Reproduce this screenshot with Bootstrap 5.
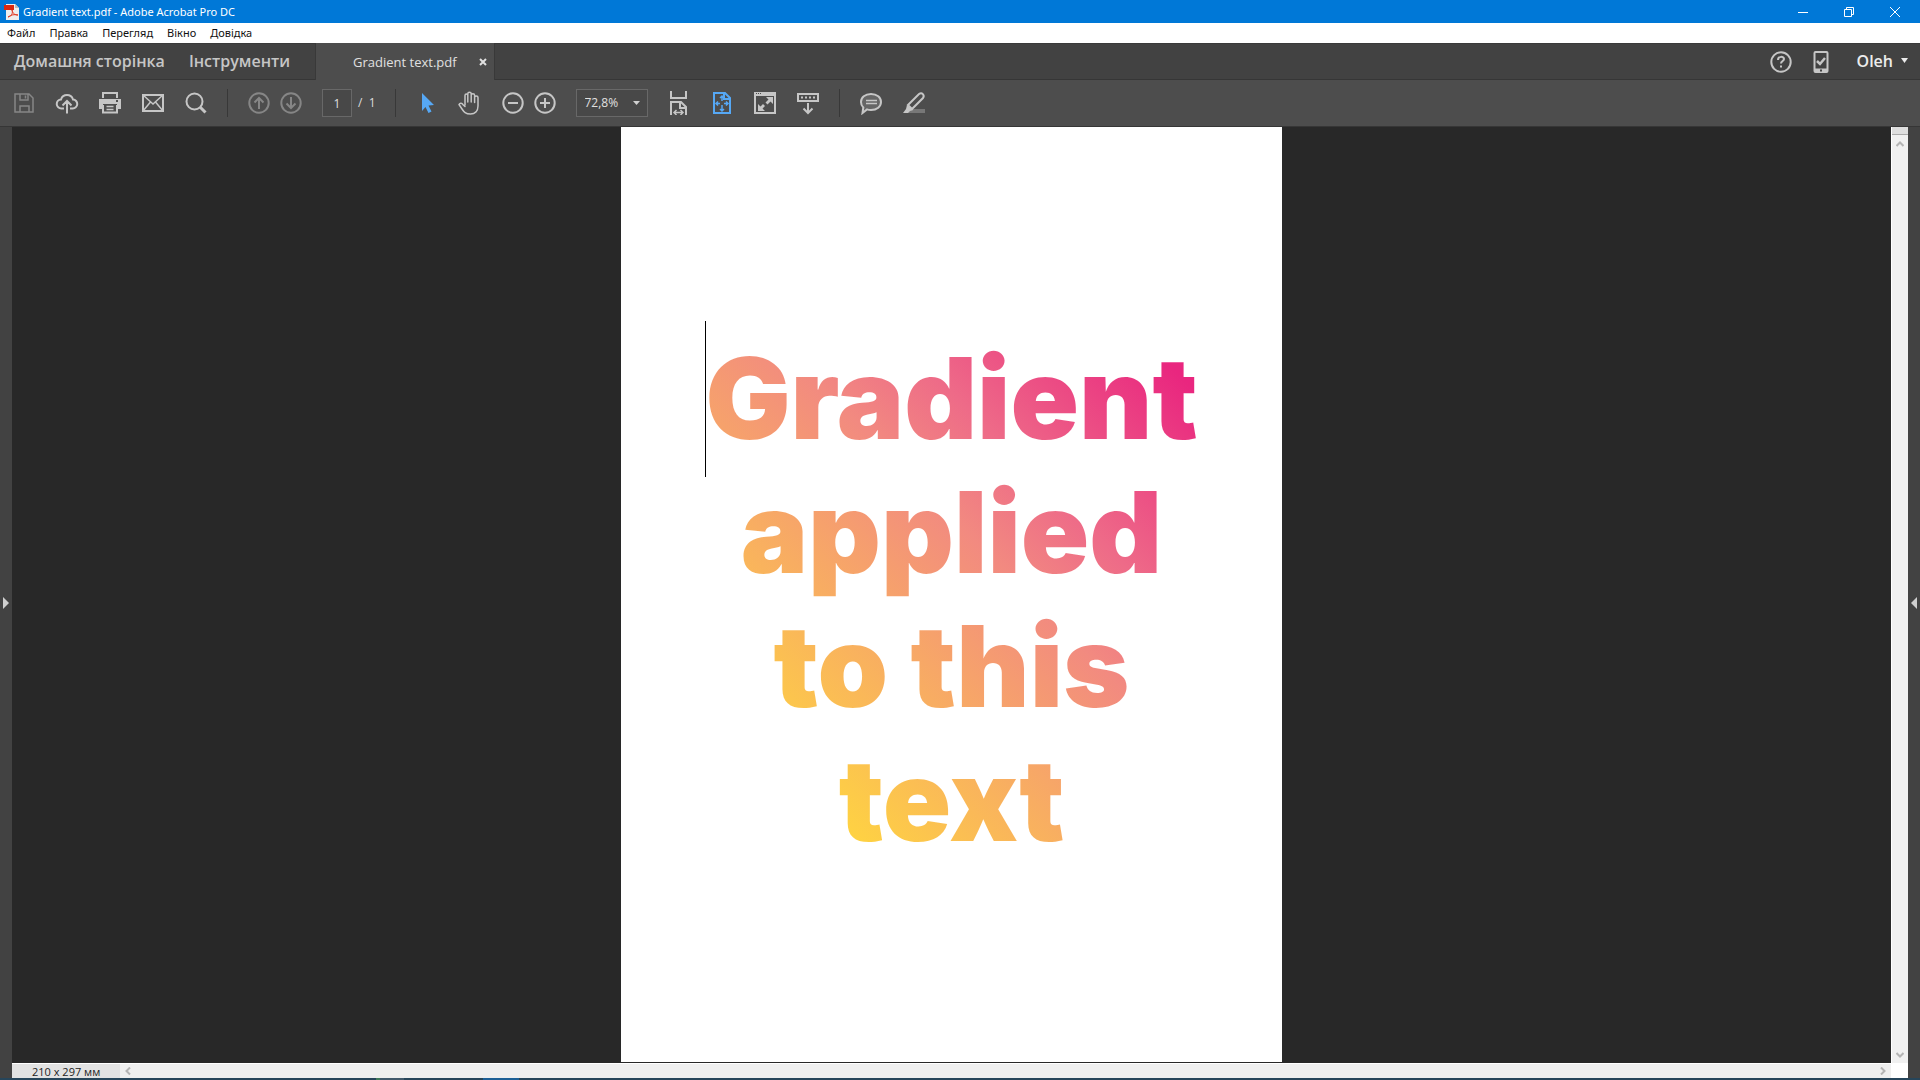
<!DOCTYPE html>
<html lang="uk">
<head>
<meta charset="utf-8">
<meta name="viewport" content="width=device-width, initial-scale=1">
<title>Gradient text.pdf - Adobe Acrobat Pro DC</title>
<link href="https://cdn.jsdelivr.net/npm/bootstrap@5.3.0/dist/css/bootstrap.min.css" rel="stylesheet">
<style>
  body { font-family: "Open Sans", "Noto Sans", sans-serif; font-size: 12px; line-height: 16px; background: #282828; }
  svg { display: block; fill: none; stroke: currentColor; stroke-width: 2; flex: none; }
  .btn, .tab-link { color: inherit; }
  .title-bar { background: #0078d7; height: 23px; color: #fff; padding: 0 2px 0 4px; font-family: "Noto Sans", sans-serif; font-size: 11px; }
  .win-btn { width: 46px; height: 23px; }
  .menu-bar { height: 20px; background: #fff; gap: 14px; padding-left: 7px; font-family: "Noto Sans", sans-serif; font-size: 11px; }
  .menu-bar a { color: #111; }
  .tab-bar { height: 37px; background: #424242; border-top: 1px solid #3a3a3a; border-bottom: 1px solid #363636; color: #c6c6c6; padding-left: 14px; }
  .tab-link { font-size: 16px; line-height: 20px; font-weight: 600; padding-bottom: 2px; }
  .doc-tab { width: 180px; height: 37px; background: #4d4d4d; border-left: 1px solid #393939; border-right: 1px solid #393939; margin-left: 25px; padding: 0 7px 0 37px; color: #e0e0e0; font-size: 13px; }
  .tab-bar .user-btn { font-size: 16px; line-height: 20px; font-weight: 600; color: #ececec; padding-bottom: 2px !important; }
  .tool-bar { height: 47px; background: #4d4d4d; border-bottom: 1px solid #363636; gap: 19px; padding-left: 12px; color: #c6c6c6; }
  .tool-pair { gap: 8px; }
  .dimmed { color: #868686; }
  .active-tool { color: #56a8f5; }
  .divider { width: 1px; height: 28px; background: #383838; }
  .page-field { gap: 6px; color: #dcdcdc; }
  .page-field input, .zoom-field { height: 28px; background: #484848; border: 1px solid #686868; color: #e0e0e0; border-radius: 0; }
  .page-field input { width: 30px; padding: 0; }
  .zoom-wrap { width: 72px; }
  .zoom-field { appearance: none; width: 100%; padding: 0 8px; }
  .zoom-arrow { right: 8px; top: 12px; pointer-events: none; }
  .side-rail { width: 12px; background: #424242; color: #cfcfcf; }
  .canvas { background: #282828; }
  .sheet { width: 661px; background: #fff; margin-bottom: 1px; padding-top: 204px; }
  .headline { font-family: Inter, sans-serif; font-weight: 900; font-size: 113px; line-height: 134px; }
  .headline span { display: block; color: transparent; background: linear-gradient(45deg, #ffd63f 15%, #f28a80 58%, #ee6b88 70%, #e9267f 94%); -webkit-background-clip: text; background-clip: text; }
  .caret { left: 0; top: -10px; width: 1px; height: 156px; background: #000; }
  .v-scroll { width: 17px; background: #f0f0f0; color: #b4b4b4; border-left: 1px solid #fff; }
  .split-grip { height: 8px; background: #dedede; border-bottom: 1px solid #aaa; }
  .h-scroll { height: 15px; background: #efefef; border-top: 1px solid #fff; color: #b4b4b4; }
  .page-size { width: 108px; background: #e2e2e2; color: #222; padding-left: 20px; font-size: 11px; }
  .scroll-corner { width: 17px; background: #fff; }
  .task-edge { height: 2px; background: #26455a; padding-left: 376px; }
  .task-edge i { height: 2px; }
  .task-app { width: 4px; background: #3f7a5a; }
  .task-mid { width: 24px; background: #41596b; margin-right: 79px; }
  .task-on { width: 36px; background: #1c5f96; }
</style>
</head>
<body class="vh-100 d-flex flex-column overflow-hidden">
<header>
  <div class="title-bar d-flex align-items-center">
    <svg width="15" height="16" viewBox="0 0 15 16" stroke="none"><path d="M2 0h9l4 4v12H2z" fill="#eee" stroke="none"/><path d="M0 1h10v5H0z" fill="#d9280f" stroke="none"/><path d="M11 0v4h4z" fill="#bbb" stroke="none"/><path d="M4 13c4-1 5-4 4-7 1 4 3 5 6 5-4-1-7 0-10 2z" stroke="#e03a25" stroke-width="1"/></svg>
    <span class="ms-1">Gradient text.pdf - Adobe Acrobat Pro DC</span>
    <div class="ms-auto d-flex">
      <button class="win-btn btn p-0 border-0 d-flex justify-content-center align-items-center" aria-label="Minimize"><svg width="10" height="10" viewBox="0 0 10 10"><path d="M0 5.5h10" stroke-width="1"/></svg></button>
      <button class="win-btn btn p-0 border-0 d-flex justify-content-center align-items-center" aria-label="Restore"><svg width="10" height="10" viewBox="0 0 10 10"><path d="M.5 2.5h7v7h-7zM2.5 2.500v-2h7v7h-2" stroke-width="1"/></svg></button>
      <button class="win-btn btn p-0 border-0 d-flex justify-content-center align-items-center" aria-label="Close"><svg width="10" height="10" viewBox="0 0 10 10"><path d="M0 0l10 10M10 0L0 10" stroke-width="1"/></svg></button>
    </div>
  </div>
  <nav class="menu-bar d-flex align-items-center">
    <a class="text-decoration-none" href="#">Файл</a>
    <a class="text-decoration-none" href="#">Правка</a>
    <a class="text-decoration-none" href="#">Перегляд</a>
    <a class="text-decoration-none" href="#">Вікно</a>
    <a class="text-decoration-none" href="#">Довідка</a>
  </nav>
  <div class="tab-bar d-flex align-items-center">
    <a class="tab-link text-decoration-none" href="#">Домашня сторінка</a>
    <a class="tab-link text-decoration-none ms-4" href="#">Інструменти</a>
    <div class="doc-tab d-flex align-items-center justify-content-between">
      <span>Gradient text.pdf</span>
      <button class="btn p-0 border-0" aria-label="Закрити вкладку"><svg width="8" height="8" viewBox="0 0 8 8"><path d="M1 1l6 6M7 1L1 7"/></svg></button>
    </div>
    <div class="ms-auto d-flex align-items-center gap-3 pe-2 me-1">
      <button class="btn p-0 border-0" aria-label="Довідка"><svg width="24" height="24" viewBox="0 0 24 24"><circle cx="12" cy="12" r="9.700"/><path d="M9 10c0-4 6-4 6-1 0 2-3 2-3 4.500M12 15.500v2"/></svg></button>
      <button class="btn p-0 border-0" aria-label="Мобільний зв’язок"><svg width="24" height="24" viewBox="0 0 24 24"><rect x="5.500" y="2" width="13" height="20" rx="1"/><path d="M5 20h14" stroke-width="3"/><path d="M8 11l3 3 5-6" stroke-width="2.500"/><path d="M11 20.500h2" stroke="#424242"/></svg></button>
      <button class="user-btn btn p-0 border-0 ms-2 d-flex align-items-center gap-2">Oleh <svg width="7" height="5" viewBox="0 0 7 5"><path d="M0 0h7L3.500 5z" fill="currentColor" stroke="none"/></svg></button>
    </div>
  </div>
  <div class="tool-bar d-flex align-items-center" role="toolbar">
    <button class="dimmed btn p-0 border-0" aria-label="Зберегти"><svg width="24" height="24" viewBox="0 0 24 24"><path d="M3 3h14l4 4v14H3zM8 3v6h8V3M8 21v-6h9v6M13.500 4.500v3" stroke-width="1.500"/></svg></button>
    <button class="btn p-0 border-0" aria-label="Хмара"><svg width="24" height="24" viewBox="0 0 24 24"><path d="M9 17.500H6.500a4.500 4.500 0 0 1-.5-9 6.300 6.300 0 0 1 12 0 4.500 4.500 0 0 1-.5 9H15M12 22.500V11M7.500 14.500L12 10l4.500 4.500"/></svg></button>
    <button class="btn p-0 border-0" aria-label="Друк"><svg width="24" height="24" viewBox="0 0 24 24"><path d="M5 7V2h14v5"/><path d="M1 8h22v10h-4v-5H5v5H1z" fill="currentColor" stroke="none"/><path d="M5 14v7.500h14V14"/><path d="M8.500 15.500h7M8.500 18.500h7" stroke-width="1.500"/><path d="M18 10h2" stroke="#4d4d4d"/></svg></button>
    <button class="btn p-0 border-0" aria-label="Пошта"><svg width="24" height="24" viewBox="0 0 24 24"><path d="M2 4h20v16H2z"/><path d="M2 4l10 9L22 4M2 20l7.500-9M22 20l-7.500-9" stroke-width="1.500"/></svg></button>
    <button class="btn p-0 border-0" aria-label="Пошук"><svg width="24" height="24" viewBox="0 0 24 24"><circle cx="10.500" cy="10.500" r="8"/><path d="M16 16l5.500 5.500" stroke-width="3"/></svg></button>
    <span class="divider"></span>
    <div class="tool-pair dimmed d-flex">
      <button class="btn p-0 border-0" aria-label="Попередня сторінка"><svg width="24" height="24" viewBox="0 0 24 24"><circle cx="12" cy="12" r="9.700"/><path d="M12 18V7M7.500 11.500L12 7l4.500 4.500"/></svg></button>
      <button class="btn p-0 border-0" aria-label="Наступна сторінка"><svg width="24" height="24" viewBox="0 0 24 24"><circle cx="12" cy="12" r="9.700"/><path d="M12 6v11M7.500 12.500L12 17l4.500-4.500"/></svg></button>
    </div>
    <div class="page-field d-flex align-items-center"><input class="text-center" type="text" value="1" aria-label="Сторінка"><span>/&nbsp; 1</span></div>
    <span class="divider"></span>
    <button class="active-tool btn p-0 border-0" aria-label="Вибір"><svg width="24" height="24" viewBox="0 0 24 24"><path d="M7 2l12 12-5.500.5 3 6-3 1.500-3-6L7 20z" fill="currentColor" stroke="none"/></svg></button>
    <button class="btn p-0 border-0" aria-label="Рука"><svg width="24" height="24" viewBox="0 0 24 24" stroke-linejoin="round" stroke-linecap="round"><path d="M7 14V4.500c0-2 2.800-2 2.800 0V2.800c0-2.200 3.400-2.200 3.400 0v1.400c0-2 3.400-2 3.400 0v2.300c0-2 3.400-2 3.400 0V15c0 5-3 8-7.500 8-5 0-6.500-2-8.500-5l-3-4.500c1-2 3-1.500 4 .2L7 15.500M9.800 4v7M13.200 4v7M16.600 5v6.500" stroke-width="1.500"/></svg></button>
    <div class="tool-pair d-flex">
      <button class="btn p-0 border-0" aria-label="Зменшити"><svg width="24" height="24" viewBox="0 0 24 24"><circle cx="12" cy="12" r="9.700"/><path d="M7 12h10"/></svg></button>
      <button class="btn p-0 border-0" aria-label="Збільшити"><svg width="24" height="24" viewBox="0 0 24 24"><circle cx="12" cy="12" r="9.700"/><path d="M7 12h10M12 7v10"/></svg></button>
    </div>
    <div class="zoom-wrap position-relative">
      <select class="zoom-field" aria-label="Масштаб"><option>72,8%</option></select>
      <svg class="zoom-arrow position-absolute" width="7" height="4" viewBox="0 0 7 4"><path d="M0 0h7L3.500 4z" fill="#d0d0d0" stroke="none"/></svg>
    </div>
    <button class="btn p-0 border-0" aria-label="За шириною"><svg width="24" height="24" viewBox="0 0 24 24"><path d="M4 0v7h15V0M4 24V11h10l5 5v8M13 11v6h6"/><path d="M7 21.500h9M9.500 19L7 21.500 9.500 24M13.500 19l2.500 2.500-2.500 2.500" stroke-width="1.500"/></svg></button>
    <button class="active-tool btn p-0 border-0" aria-label="Ціла сторінка"><svg width="24" height="24" viewBox="0 0 24 24"><path d="M4 2h11l5 5v15H4zM14 2v6h6"/><path d="M12 5v5M12 14v6M5.500 12.500H10M14 12.500h4.500M10 7l2-2 2 2M10 18l2 2 2-2M8 10.500l-2 2 2 2M16 10.500l2 2-2 2" stroke-width="1.500"/></svg></button>
    <button class="btn p-0 border-0" aria-label="Повний екран"><svg width="24" height="24" viewBox="0 0 24 24"><path d="M2 2h20v20H2z"/><path d="M1 4h22"/><path d="M3 2.500h6" stroke="#4d4d4d" stroke-width="1" stroke-dasharray="1 1"/><path d="M13 6h7v7l-2.500-2.500-3 3-2-2 3-3zM5 13l2.500 2.500 2.500-2.500 2 2-2.500 2.500L12 20H5z" fill="currentColor" stroke="none"/></svg></button>
    <button class="btn p-0 border-0" aria-label="Панель"><svg width="24" height="24" viewBox="0 0 24 24"><path d="M2 3h20v7H2z"/><path d="M5 6.500h14" stroke-dasharray="2 2"/><path d="M12 12v10M7.500 17.500L12 22l4.500-4.500"/></svg></button>
    <span class="divider"></span>
    <button class="btn p-0 border-0" aria-label="Коментар"><svg width="24" height="24" viewBox="0 0 24 24"><path d="M12 3c6 0 10 3.500 10 8s-4 8-10 8c-1.500 0-3-.2-4-.6L3.500 22l.8-5.500C2.700 15 2 13 2 11c0-4.500 4-8 10-8z" fill="#666"/><path d="M7 9.500h11M7 12.500h11" stroke-width="1.500"/></svg></button>
    <button class="btn p-0 border-0" aria-label="Виділити"><svg width="24" height="24" viewBox="0 0 24 24"><path d="M8 18h15v4H5z" fill="#777" stroke="none"/><path d="M6 14L17 3c3-2 6 1 4 4L10 18z"/><path d="M5 14l6 5-3 1-2 2H1l3-4z" fill="currentColor" stroke="none"/></svg></button>
  </div>
</header>
<main class="flex-grow-1 d-flex">
  <button class="side-rail border-0 p-0 d-flex align-items-center justify-content-center" aria-label="Ліва панель"><svg width="6" height="12" viewBox="0 0 6 12"><path d="M0 0l6 6-6 6z" fill="currentColor" stroke="none"/></svg></button>
  <div class="flex-grow-1 d-flex flex-column">
    <div class="flex-grow-1 d-flex">
      <div class="canvas flex-grow-1 d-flex justify-content-center">
        <article class="sheet d-flex justify-content-center align-items-start">
          <h1 class="headline position-relative text-center m-0"><span>Gradient<br>applied<br>to this<br>text</span><i class="caret position-absolute"></i></h1>
        </article>
      </div>
      <div class="v-scroll d-flex flex-column align-items-center">
        <div class="split-grip w-100"></div>
        <svg class="mt-1" width="8" height="10" viewBox="0 0 8 10"><path d="M.5 7L4 3.500 7.500 7"/></svg>
        <svg class="mt-auto mb-1" width="8" height="8" viewBox="0 0 8 8"><path d="M.5 2L4 5.500 7.500 2"/></svg>
      </div>
    </div>
    <div class="h-scroll d-flex align-items-stretch">
      <span class="page-size">210 x 297 мм</span>
      <svg class="ms-1 align-self-center" width="8" height="8" viewBox="0 0 8 8"><path d="M6 .5L2.500 4 6 7.500"/></svg>
      <svg class="ms-auto me-1 align-self-center" width="8" height="8" viewBox="0 0 8 8"><path d="M2 .5L5.500 4 2 7.500"/></svg>
      <span class="scroll-corner"></span>
    </div>
  </div>
  <button class="side-rail border-0 p-0 d-flex align-items-center justify-content-center" aria-label="Права панель"><svg width="6" height="12" viewBox="0 0 6 12"><path d="M6 0L0 6l6 6z" fill="currentColor" stroke="none"/></svg></button>
</main>
<footer class="task-edge d-flex"><i class="task-app"></i><i class="task-mid"></i><i class="task-on"></i></footer>
<script src="https://cdn.jsdelivr.net/npm/bootstrap@5.3.0/dist/js/bootstrap.bundle.min.js"></script>
</body>
</html>
